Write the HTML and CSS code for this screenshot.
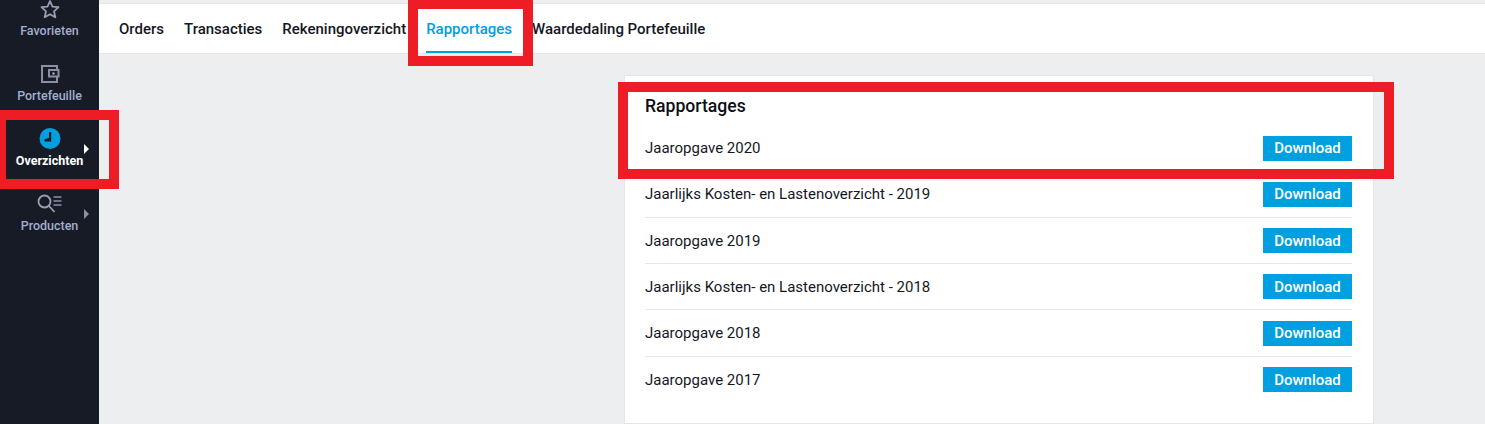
FILE: index.html
```html
<!DOCTYPE html>
<html lang="nl">

<head>
    <meta charset="UTF-8">
    <meta name="viewport" content="width=device-width, initial-scale=1.0">
    <title>Rapportages</title>
    <link rel="stylesheet" href="styles.css">
</head>

<body>
    <div class="app">
        <!-- Sidebar -->
        <nav class="sidebar">
            <a class="side-item">
                <svg class="side-icon" viewBox="0 0 22 22" width="22" height="22">
                    <path d="M11 3l2.500 5.600 6 .6-4.500 4.100 1.300 6-5.300-3.100-5.300 3.100 1.300-6-4.500-4.100 6-.6z" fill="none" stroke="#9a9eb4" stroke-width="1.800" stroke-linejoin="round" />
                </svg>
                <span>Favorieten</span>
            </a>
            <a class="side-item">
                <svg class="side-icon" viewBox="0 0 22 22" width="22" height="22">
                    <path d="M18 6.500V3H3v16h15v-5.500" fill="none" stroke="#8b8fa3" stroke-width="2" />
                    <rect x="10" y="7" width="9.500" height="6.500" fill="none" stroke="#8b8fa3" stroke-width="2" />
                    <rect x="13.500" y="9.500" width="2" height="2" fill="#c4c7d4" />
                </svg>
                <span>Portefeuille</span>
            </a>
            <a class="side-item active">
                <svg class="side-icon" viewBox="0 0 22 22" width="22" height="22">
                    <circle cx="11" cy="10.500" r="10.500" fill="#009fdf" />
                    <path d="M10 4h2.200v9.500H5.500v-2.200L10 10z" fill="#171b26" />
                </svg>
                <span>Overzichten</span>
                <i class="side-arrow"></i>
            </a>
            <a class="side-item">
                <svg class="side-icon" viewBox="0 0 25 22" width="25" height="22">
                    <circle cx="7.500" cy="8.500" r="6" fill="none" stroke="#9a9eb4" stroke-width="1.800" />
                    <path d="M12 13l5.500 6" fill="none" stroke="#9a9eb4" stroke-width="1.800" />
                    <path d="M16.500 4h8M16.500 8h8M16.500 12h8" fill="none" stroke="#8b8fa3" stroke-width="1.600" />
                </svg>
                <span>Producten</span>
                <i class="side-arrow"></i>
            </a>
        </nav>

        <div class="content">
            <!-- Tabs -->
            <div class="tabs">
                <a class="tab">Orders</a>
                <a class="tab">Transacties</a>
                <a class="tab">Rekeningoverzicht</a>
                <a class="tab active">Rapportages</a>
                <a class="tab">Waardedaling Portefeuille</a>
            </div>

            <div class="card">
                <h2>Rapportages</h2>
                <div class="report-row"><span>Jaaropgave 2020</span><button class="download-button">Download</button></div>
                <div class="report-row"><span>Jaarlijks Kosten- en Lastenoverzicht - 2019</span><button class="download-button">Download</button></div>
                <div class="report-row"><span>Jaaropgave 2019</span><button class="download-button">Download</button></div>
                <div class="report-row"><span>Jaarlijks Kosten- en Lastenoverzicht - 2018</span><button class="download-button">Download</button></div>
                <div class="report-row"><span>Jaaropgave 2018</span><button class="download-button">Download</button></div>
                <div class="report-row"><span>Jaaropgave 2017</span><button class="download-button">Download</button></div>
            </div>
        </div>
    </div>

    <!-- Red markers drawn over the screenshot -->
    <div class="marker marker-tab"></div>
    <div class="marker marker-card"></div>
    <div class="marker marker-side"></div>
</body>

</html>
```

FILE: styles.css
```css
:root {
    --sidebar-color: #171b26;
    --primary-color: #009fdf;
    --text-primary: #15171f;
    --side-text: #a3aed0;
    --background-secondary: #edeef0;
    --line-color: #e5e6e8;
    --marker-color: #ee1c25;
}

* {
    box-sizing: border-box;
}

html,
body {
    margin: 0;
    height: 100%;
    overflow: hidden;
}

body {
    font-family: Roboto, "Liberation Sans", sans-serif;
    color: var(--text-primary);
    background: #fff;
    position: relative;
}

.app {
    display: flex;
    height: 424px;
}

.sidebar {
    width: 99px;
    flex-shrink: 0;
    background: var(--sidebar-color);
    overflow: hidden;
}

.side-item {
    display: flex;
    flex-direction: column;
    align-items: center;
    height: 65px;
    position: relative;
    font-size: 12.5px;
    font-weight: 500;
    color: var(--side-text);
}

.side-item:first-child {
    margin-top: -15px;
}

.side-item span {
    line-height: 16px;
    margin-top: 3px;
}

.side-icon {
    display: block;
    margin-top: 13px;
}

.side-item.active {
    color: #fff;
    font-weight: 700;
}

.side-arrow {
    position: absolute;
    left: 84px;
    top: 29px;
    width: 0;
    height: 0;
    border-left: 5px solid #8b8fa3;
    border-top: 5px solid transparent;
    border-bottom: 5px solid transparent;
}

.active .side-arrow {
    border-left-color: #fff;
}

.content {
    flex: 1;
    background: var(--background-secondary);
    overflow: hidden;
}

.tabs {
    display: flex;
    gap: 20px;
    height: 51px;
    margin-top: 3px;
    padding-left: 20px;
    background: #fff;
    border-top: 1px solid var(--line-color);
    border-bottom: 1px solid var(--line-color);
}

.tab {
    font-size: 15px;
    font-weight: 500;
    line-height: 50px;
    height: 49px;
}

.tab.active {
    color: var(--primary-color);
    border-bottom: 2px solid var(--primary-color);
}

.card {
    width: 750px;
    height: 349px;
    margin: 21px 0 0 525px;
    padding: 0 21px 0 20px;
    background: #fff;
    border: 1px solid var(--line-color);
}

.card h2 {
    margin: 0;
    padding-top: 19px;
    height: 49.4px;
    font-size: 17.6px;
    font-weight: 500;
    line-height: 22px;
    color: #0c0e14;
}

.report-row {
    display: flex;
    justify-content: space-between;
    align-items: center;
    height: 46.25px;
    padding: 10px 0;
    font-size: 15px;
    border-bottom: 1px solid var(--line-color);
}

.report-row:last-child {
    border-bottom: none;
}

.download-button {
    width: 89px;
    height: 25px;
    padding: 0;
    border: none;
    background: var(--primary-color);
    color: #fff;
    font-family: inherit;
    font-size: 15px;
    font-weight: 500;
}

.marker {
    position: absolute;
    border: 10px solid var(--marker-color);
}

.marker-tab {
    left: 408px;
    top: -1px;
    width: 125px;
    height: 67px;
}

.marker-card {
    left: 618px;
    top: 82px;
    width: 776px;
    height: 97px;
}

.marker-side {
    left: 0;
    top: 110px;
    width: 119px;
    height: 79px;
    border-left-width: 6px;
}
```
